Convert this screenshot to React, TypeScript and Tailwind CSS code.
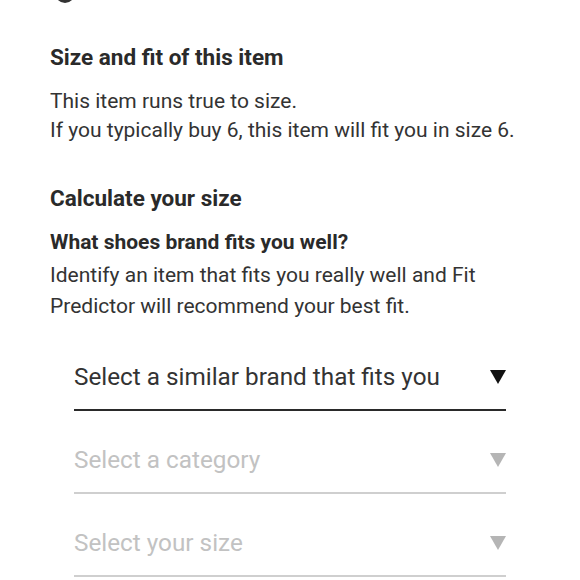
import React from "react";

const selects = [
  { label: "Select a similar brand that fits you", active: true },
  { label: "Select a category", active: false },
  { label: "Select your size", active: false },
];

const Arrow = ({ color }: { color: string }) => (
  <svg width="16" height="14" viewBox="0 0 16 14" className="shrink-0">
    <path d="M0 0 H16 L8 14 Z" fill={color} />
  </svg>
);

const App = () => {
  return (
    <div
      className="w-[580px] h-[580px] overflow-hidden bg-white pl-[50px] text-[#333]"
      style={{ fontFamily: "Roboto, 'Liberation Sans', sans-serif" }}
    >
      {/* cut-off element from the section above */}
      <div className="h-[3px] overflow-hidden pl-[5px]">
        <div className="w-[20px] h-[20px] rounded-full bg-[#333] -mt-[17px]"></div>
      </div>

      <h2 className="mt-[40px] text-[22.5px] leading-[28px] font-bold text-[#2a2a2a]">
        Size and fit of this item
      </h2>
      <p className="mt-[16px] text-[21px] leading-[29px] whitespace-nowrap">
        This item runs true to size.
        <br />
        If you typically buy 6, this item will fit you in size 6.
      </p>

      <h2 className="mt-[39px] text-[22.5px] leading-[28px] font-bold text-[#2a2a2a]">
        Calculate your size
      </h2>
      <h3 className="mt-[16px] text-[21px] leading-[28px] font-bold text-[#2a2a2a]">
        What shoes brand fits you well?
      </h3>
      <p className="mt-[4px] text-[21px] leading-[31px] whitespace-nowrap">
        Identify an item that fits you really well and Fit
        <br />
        Predictor will recommend your best fit.
      </p>

      <div className="ml-[24px] w-[432px] mt-[40px] flex flex-col gap-[34px]">
        {selects.map((s, i) => (
          <div
            key={i}
            className={
              s.active
                ? "flex items-center justify-between pb-[17px] border-b-2 border-[#2a2a2a]"
                : "flex items-center justify-between pb-[17px] border-b-2 border-[#cfcfcf]"
            }
          >
            <span
              className={
                s.active
                  ? "text-[24.3px] leading-[30px] text-[#333]"
                  : "text-[24.3px] leading-[30px] text-[#c2c2c2]"
              }
            >
              {s.label}
            </span>
            <Arrow color={s.active ? "#111" : "#b5b5b5"} />
          </div>
        ))}
      </div>
    </div>
  );
};

export default App;
